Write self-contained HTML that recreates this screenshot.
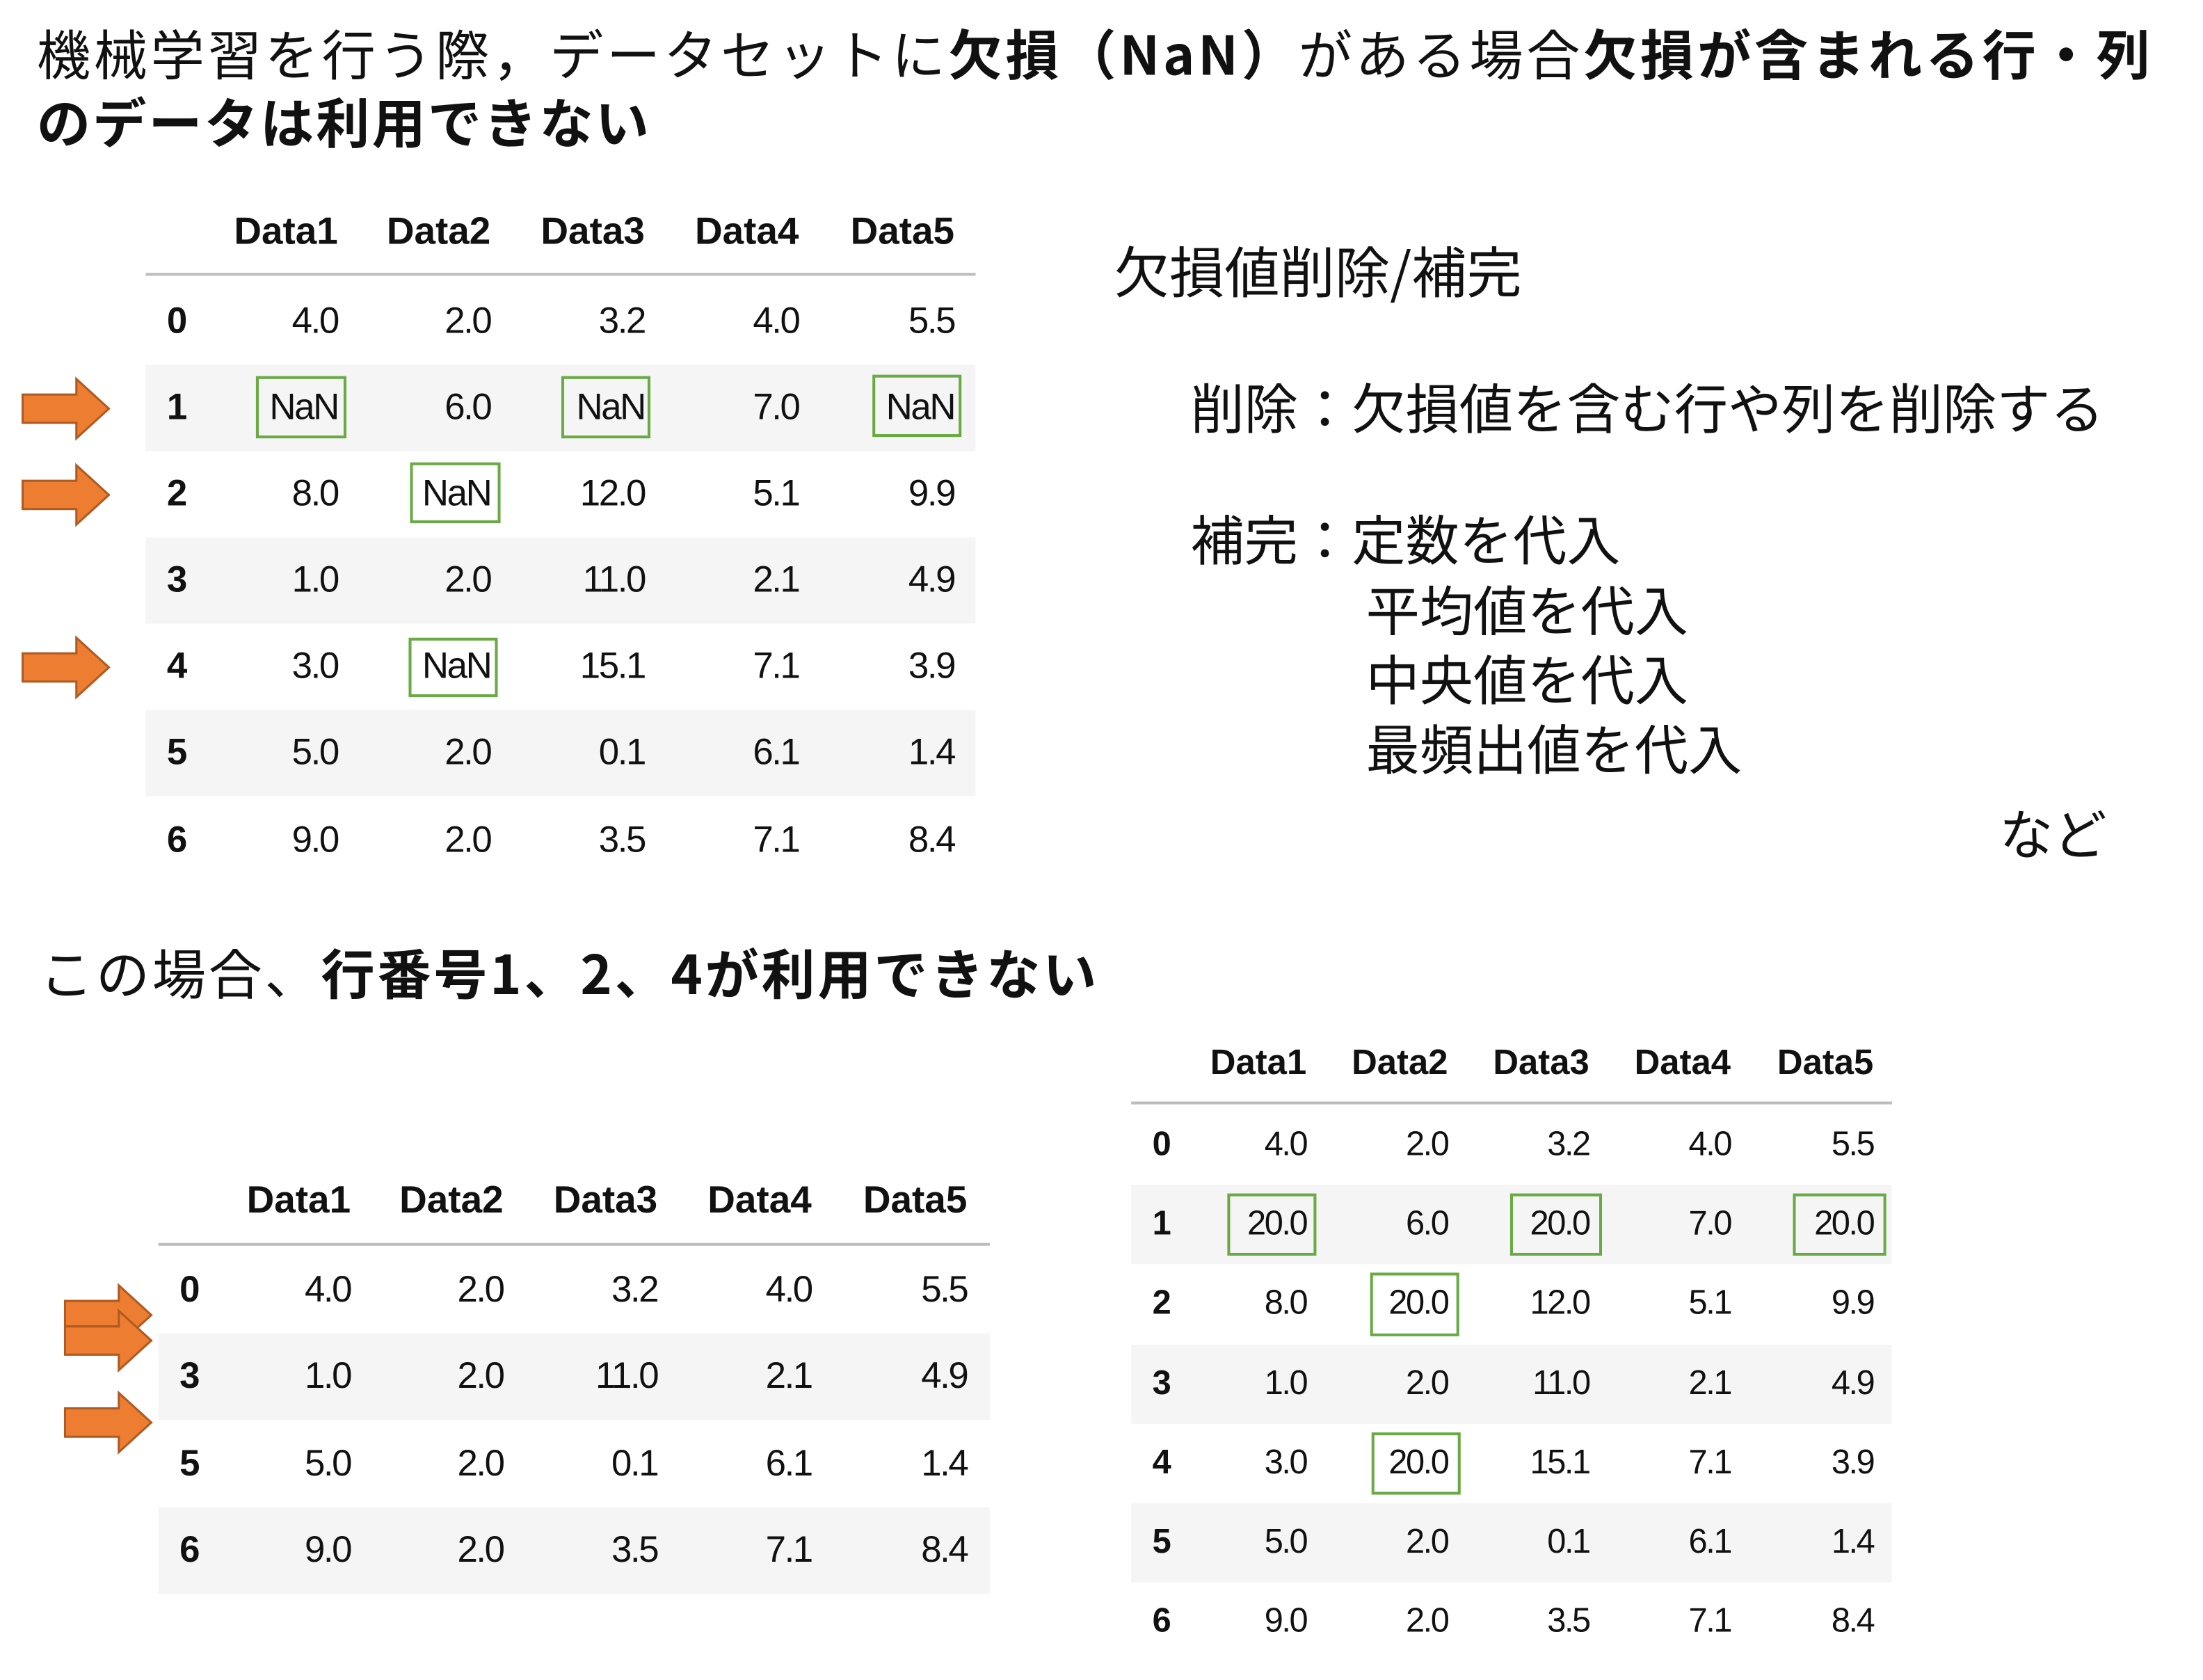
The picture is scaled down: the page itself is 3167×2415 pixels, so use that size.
<!DOCTYPE html>
<html><head><meta charset="utf-8"><style>
html,body{margin:0;padding:0;background:#fff;width:3167px;height:2415px;overflow:hidden}
#w{position:absolute;left:0;top:0;width:1558px;height:1188px;transform:scale(2.0327);transform-origin:0 0;font-family:"Liberation Sans","Noto Sans CJK JP",sans-serif;color:#111}
.a{position:absolute;white-space:nowrap}
.j{font-family:"Noto Sans CJK JP",sans-serif}
.t{font-size:38px;line-height:1}
.c{position:absolute;text-align:right;white-space:nowrap;transform:translateY(-50%);letter-spacing:-1.2px}
.h{font-weight:bold;letter-spacing:0}
.s{position:absolute;background:#f5f5f5}
.r{position:absolute;height:2px;background:#bdbdbd}
.g{position:absolute;border:2px solid #6aaa45;box-sizing:border-box}
</style></head><body><div id="w">
<div class="a j t" style="left:26px;top:18px;letter-spacing:2.3px">機械学習を行う際，データセットに<b>欠損（NaN）</b>がある場合<b>欠損が含まれる行・列</b></div>
<div class="a j t" style="left:26px;top:66px;letter-spacing:1.5px"><b>のデータは利用できない</b></div>

<div class="a j" style="left:788px;top:172px;font-size:39px;line-height:1">欠損値削除/補完</div>
<div class="a j" style="left:842px;top:268px;font-size:38px;line-height:1">削除：欠損値を含む行や列を削除する</div>
<div class="a j" style="left:842px;top:361px;font-size:38px;line-height:1">補完：定数を代入</div>
<div class="a j" style="left:966px;top:411px;font-size:38px;line-height:1">平均値を代入</div>
<div class="a j" style="left:966px;top:460px;font-size:38px;line-height:1">中央値を代入</div>
<div class="a j" style="left:966px;top:509px;font-size:38px;line-height:1">最頻出値を代入</div>
<div class="a j" style="left:1414px;top:569px;font-size:38px;line-height:1">など</div>

<div class="a j" style="left:28px;top:668px;font-size:38px;line-height:1;letter-spacing:1.8px">この場合、<b>行番号1、2、4が利用できない</b></div>

<svg style="position:absolute;left:0;top:0" width="1558" height="1188">
<defs><path id="ar" d="M0,-10 H38 V-21 L61,0 L38,21 V10 H0 Z" fill="#ed7d31" stroke="#ae5a21" stroke-width="1.5"/></defs>
<use href="#ar" x="16" y="289"/><use href="#ar" x="16" y="350"/><use href="#ar" x="16" y="472"/>
<use href="#ar" x="46" y="930"/><use href="#ar" x="46" y="948"/><use href="#ar" x="46" y="1006"/>
</svg>
</div>
<script>
function tbl(o){
 var w=document.getElementById('w'),h='';
 o.stripes.forEach(function(y){h+='<div class="s" style="left:'+o.l+'px;width:'+(o.r-o.l)+'px;top:'+(y-o.rh/2)+'px;height:'+o.rh+'px"></div>';});
 h+='<div class="r" style="left:'+o.l+'px;width:'+(o.r-o.l)+'px;top:'+o.rule+'px"></div>';
 o.cols.forEach(function(x,i){h+='<div class="c h" style="right:'+(1558-x)+'px;top:'+o.hy+'px;font-size:'+(o.fs+1)+'px">Data'+(i+1)+'</div>';});
 o.rows.forEach(function(r,ri){
  h+='<div class="c h" style="left:'+o.ix+'px;text-align:left;top:'+o.ry[ri]+'px;font-size:'+o.fs+'px">'+r[0]+'</div>';
  for(var k=1;k<6;k++)h+='<div class="c" style="right:'+(1558-o.cols[k-1])+'px;top:'+o.ry[ri]+'px;font-size:'+o.fs+'px">'+r[k]+'</div>';
 });
 (o.boxes||[]).forEach(function(b){h+='<div class="g" style="left:'+b[0]+'px;top:'+b[1]+'px;width:'+(b[2]-b[0])+'px;height:'+(b[3]-b[1])+'px"></div>';});
 w.insertAdjacentHTML('beforeend',h);
}
var full=[['0','4.0','2.0','3.2','4.0','5.5'],['1','NaN','6.0','NaN','7.0','NaN'],['2','8.0','NaN','12.0','5.1','9.9'],['3','1.0','2.0','11.0','2.1','4.9'],['4','3.0','NaN','15.1','7.1','3.9'],['5','5.0','2.0','0.1','6.1','1.4'],['6','9.0','2.0','3.5','7.1','8.4']];
tbl({l:103,r:690,rule:193,hy:164,fs:26,rh:61,ix:118,cols:[239,347,456,565,675],ry:[227,288,349,410,471,532,594],stripes:[288,410,532],rows:full,
 boxes:[[181,266,245,310],[397,266,460,310],[617,265,680,309],[290,327,354,370],[289,451,352,493]]});
tbl({l:112,r:700,rule:879,hy:849,fs:26,rh:61,ix:127,cols:[248,356,465,574,684],ry:[912,973,1035,1096],stripes:[973,1096],
 rows:[full[0],full[3],full[5],full[6]]});
var f2=full.map(function(r){return r.map(function(v){return v=='NaN'?'20.0':v;});});
tbl({l:800,r:1338,rule:779,hy:752,fs:24,rh:56,ix:815,cols:[924,1024,1124,1224,1325],ry:[810,866,922,979,1035,1091,1147],stripes:[866,979,1091],rows:f2,
 boxes:[[868,844,931,888],[1068,844,1133,888],[1268,844,1334,888],[969,900,1032,945],[970,1013,1033,1057]]});
</script>
</body></html>
